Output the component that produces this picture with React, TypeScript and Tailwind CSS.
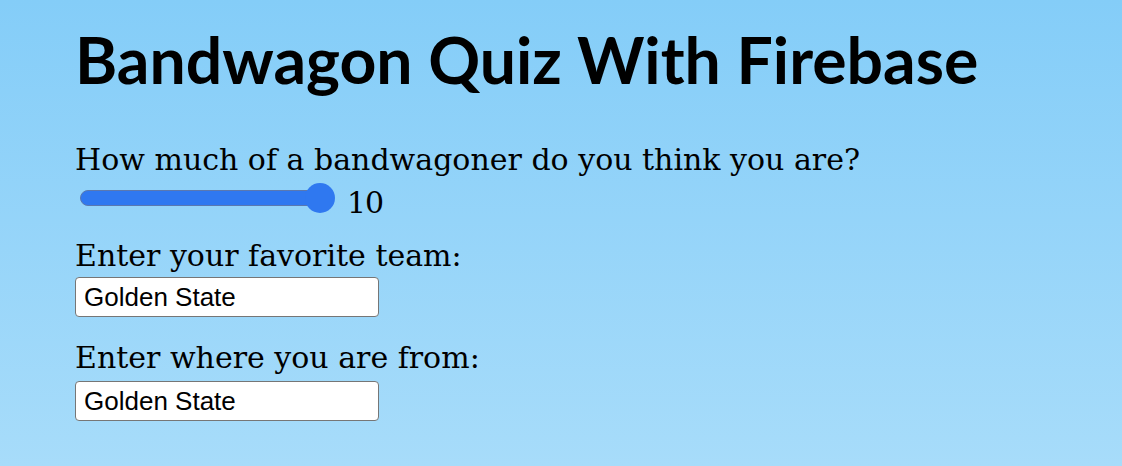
const App = () => {
  return (
    <div className="min-h-[466px] w-full bg-gradient-to-b from-[#84cdf8] to-[#a7dcfa] pl-[75px] pt-[18px] text-black">
      <h1 className="font-['Lato',sans-serif] text-[64.3px] font-bold leading-[84px]">Bandwagon Quiz With Firebase</h1>
      <div className="mt-[40px] flex flex-col font-['DejaVu_Serif',serif] text-[30px]">
        <label className="leading-[36px]">How much of a bandwagoner do you think you are?</label>
        <div className="flex items-start">
          <div className="relative ml-[5px] mt-[5px] h-[30px] w-[255px]">
            <div className="absolute left-0 right-[10px] top-[7px] h-[16px] rounded-full border border-[#5a78b0] bg-[#2f78f0]" />
            <div className="absolute right-0 top-0 h-[30px] w-[30px] rounded-full bg-[#2f78f0]" />
          </div>
          <span className="ml-[12px] mt-[7px] leading-[36px] tracking-[-1px]">10</span>
        </div>
        <label className="mt-[17px] leading-[36px]">Enter your favorite team:</label>
        <input
          type="text"
          defaultValue="Golden State"
          className="mt-[3px] h-[40px] w-[304px] rounded-[4px] border border-[#767676] bg-white px-[8px] font-['Liberation_Sans',sans-serif] text-[26px]"
        />
        <label className="mt-[23px] leading-[36px]">Enter where you are from:</label>
        <input
          type="text"
          defaultValue="Golden State"
          className="mt-[5px] h-[40px] w-[304px] rounded-[4px] border border-[#767676] bg-white px-[8px] font-['Liberation_Sans',sans-serif] text-[26px]"
        />
      </div>
    </div>
  );
};

export default App;
